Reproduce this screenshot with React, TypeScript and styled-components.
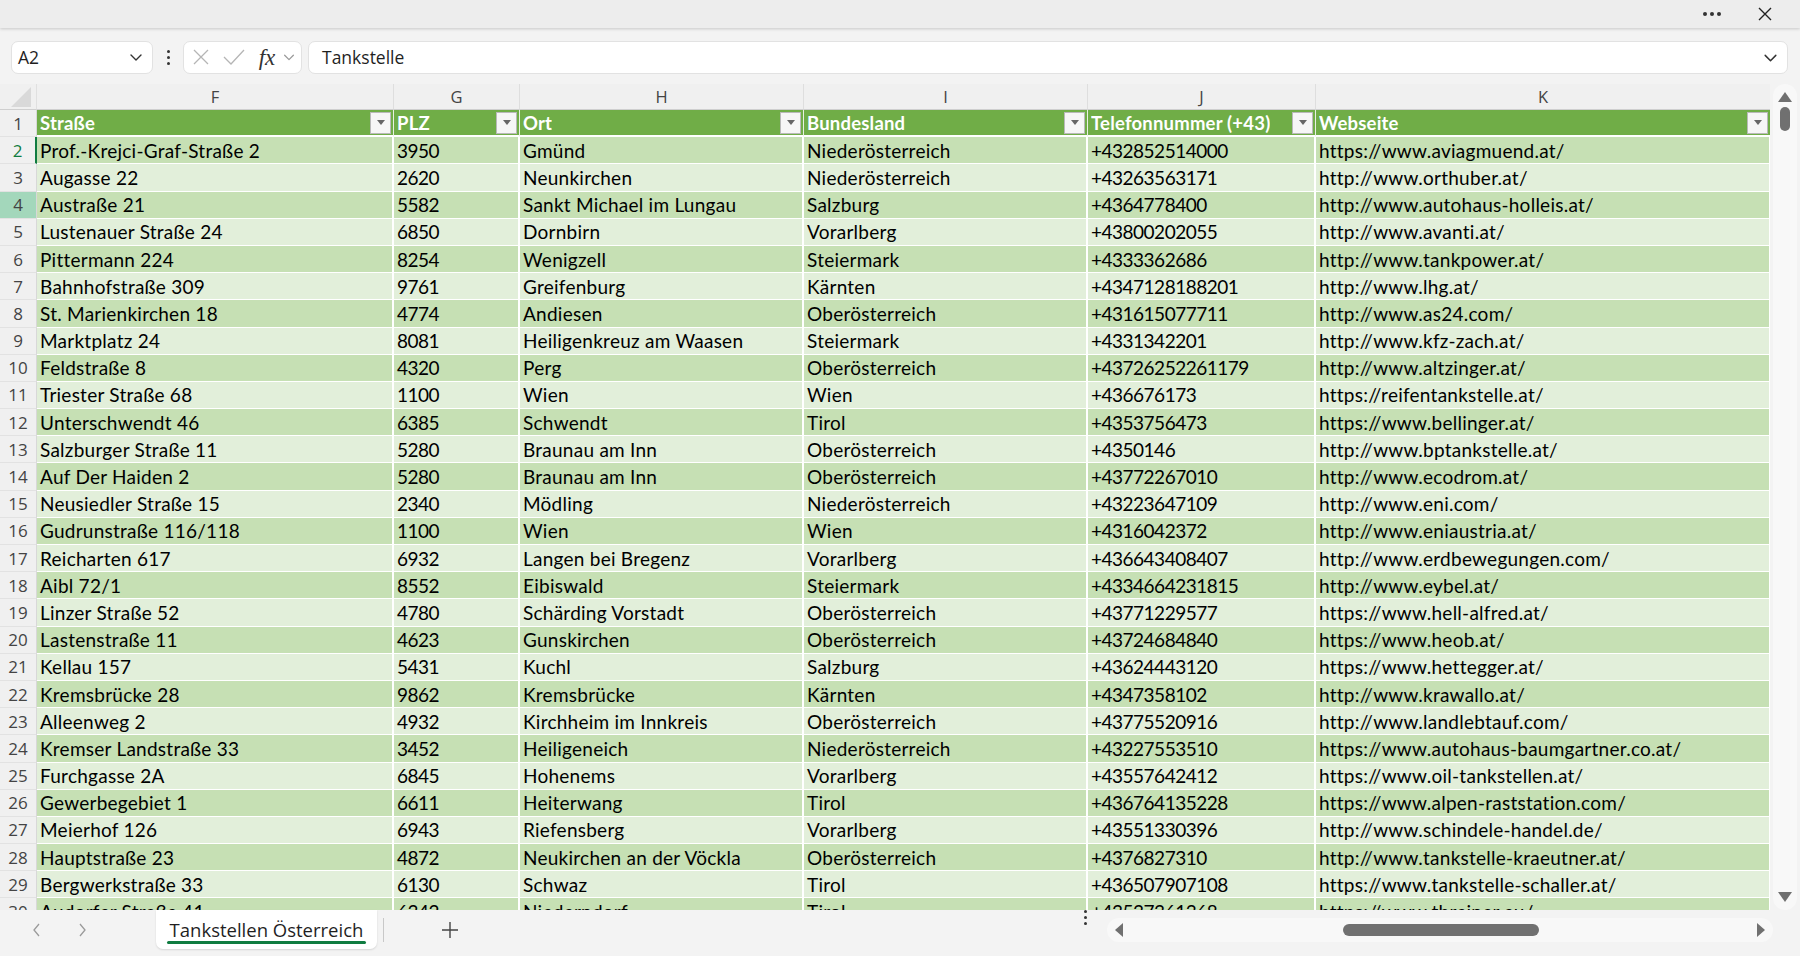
import styled, { createGlobalStyle } from 'styled-components';

const GlobalStyle = createGlobalStyle`
  html, body {
    margin: 0;
    padding: 0;
    background: #f3f3f3;
  }
  * {
    box-sizing: border-box;
  }
`;

const COLS = '37px 357px 126px 284px 284px 228px 455px';
const ROW_H = 27.2;

const letters = ['F', 'G', 'H', 'I', 'J', 'K'];
const headers = ['Straße', 'PLZ', 'Ort', 'Bundesland', 'Telefonnummer (+43)', 'Webseite'];
// Spalten mit reinen Ziffern (PLZ, Telefon)
const numericCols = [1, 4];

const rows: string[][] = [
  ['Prof.-Krejci-Graf-Straße 2', '3950', 'Gmünd', 'Niederösterreich', '+432852514000', 'https://www.aviagmuend.at/'],
  ['Augasse 22', '2620', 'Neunkirchen', 'Niederösterreich', '+43263563171', 'http://www.orthuber.at/'],
  ['Austraße 21', '5582', 'Sankt Michael im Lungau', 'Salzburg', '+4364778400', 'http://www.autohaus-holleis.at/'],
  ['Lustenauer Straße 24', '6850', 'Dornbirn', 'Vorarlberg', '+43800202055', 'http://www.avanti.at/'],
  ['Pittermann 224', '8254', 'Wenigzell', 'Steiermark', '+4333362686', 'http://www.tankpower.at/'],
  ['Bahnhofstraße 309', '9761', 'Greifenburg', 'Kärnten', '+4347128188201', 'http://www.lhg.at/'],
  ['St. Marienkirchen 18', '4774', 'Andiesen', 'Oberösterreich', '+431615077711', 'http://www.as24.com/'],
  ['Marktplatz 24', '8081', 'Heiligenkreuz am Waasen', 'Steiermark', '+4331342201', 'http://www.kfz-zach.at/'],
  ['Feldstraße 8', '4320', 'Perg', 'Oberösterreich', '+43726252261179', 'http://www.altzinger.at/'],
  ['Triester Straße 68', '1100', 'Wien', 'Wien', '+436676173', 'https://reifentankstelle.at/'],
  ['Unterschwendt 46', '6385', 'Schwendt', 'Tirol', '+4353756473', 'https://www.bellinger.at/'],
  ['Salzburger Straße 11', '5280', 'Braunau am Inn', 'Oberösterreich', '+4350146', 'http://www.bptankstelle.at/'],
  ['Auf Der Haiden 2', '5280', 'Braunau am Inn', 'Oberösterreich', '+43772267010', 'http://www.ecodrom.at/'],
  ['Neusiedler Straße 15', '2340', 'Mödling', 'Niederösterreich', '+43223647109', 'http://www.eni.com/'],
  ['Gudrunstraße 116/118', '1100', 'Wien', 'Wien', '+4316042372', 'http://www.eniaustria.at/'],
  ['Reicharten 617', '6932', 'Langen bei Bregenz', 'Vorarlberg', '+436643408407', 'http://www.erdbewegungen.com/'],
  ['Aibl 72/1', '8552', 'Eibiswald', 'Steiermark', '+4334664231815', 'http://www.eybel.at/'],
  ['Linzer Straße 52', '4780', 'Schärding Vorstadt', 'Oberösterreich', '+43771229577', 'https://www.hell-alfred.at/'],
  ['Lastenstraße 11', '4623', 'Gunskirchen', 'Oberösterreich', '+43724684840', 'https://www.heob.at/'],
  ['Kellau 157', '5431', 'Kuchl', 'Salzburg', '+43624443120', 'https://www.hettegger.at/'],
  ['Kremsbrücke 28', '9862', 'Kremsbrücke', 'Kärnten', '+4347358102', 'http://www.krawallo.at/'],
  ['Alleenweg 2', '4932', 'Kirchheim im Innkreis', 'Oberösterreich', '+43775520916', 'http://www.landlebtauf.com/'],
  ['Kremser Landstraße 33', '3452', 'Heiligeneich', 'Niederösterreich', '+43227553510', 'https://www.autohaus-baumgartner.co.at/'],
  ['Furchgasse 2A', '6845', 'Hohenems', 'Vorarlberg', '+43557642412', 'https://www.oil-tankstellen.at/'],
  ['Gewerbegebiet 1', '6611', 'Heiterwang', 'Tirol', '+436764135228', 'https://www.alpen-raststation.com/'],
  ['Meierhof 126', '6943', 'Riefensberg', 'Vorarlberg', '+43551330396', 'http://www.schindele-handel.de/'],
  ['Hauptstraße 23', '4872', 'Neukirchen an der Vöckla', 'Oberösterreich', '+4376827310', 'http://www.tankstelle-kraeutner.at/'],
  ['Bergwerkstraße 33', '6130', 'Schwaz', 'Tirol', '+436507907108', 'https://www.tankstelle-schaller.at/'],
  ['Audorfer Straße 41', '6342', 'Niederndorf', 'Tirol', '+43537361368', 'https://www.threiner.eu/'],
];

const Chevron = ({ size = 14, color = '#444' }: { size?: number; color?: string }) => (
  <svg width={size} height={size} viewBox="0 0 16 16">
    <path d="M3 6l5 5 5-5" fill="none" stroke={color} strokeWidth="1.4" strokeLinecap="round" strokeLinejoin="round" />
  </svg>
);

const App = () => {
  return (
    <>
      <GlobalStyle />
      <Shell>
        <TitleBar>
          <Dots>
            <i />
            <i />
            <i />
          </Dots>
          <CloseBtn>
            <svg width="16" height="16" viewBox="0 0 16 16">
              <path d="M2 2l12 12M14 2L2 14" stroke="#222" strokeWidth="1.4" />
            </svg>
          </CloseBtn>
        </TitleBar>

        {/* Formelzeile */}
        <FormulaBar>
          <NameBox>
            <span>A2</span>
            <Chevron size={16} color="#333" />
          </NameBox>
          <Kebab>
            <i />
            <i />
            <i />
          </Kebab>
          <FxBox>
            <IconSlot $w={30}>
              <svg width="20" height="20" viewBox="0 0 20 20">
                <path d="M3 3l14 14M17 3L3 17" stroke="#b5b5b5" strokeWidth="1.3" />
              </svg>
            </IconSlot>
            <IconSlot $w={36}>
              <svg width="24" height="20" viewBox="0 0 24 20">
                <path d="M2 10l7 7L22 3" fill="none" stroke="#b5b5b5" strokeWidth="1.3" />
              </svg>
            </IconSlot>
            <IconSlot $w={30}>
              <FxLabel>fx</FxLabel>
            </IconSlot>
            <Chevron size={14} color="#999" />
          </FxBox>
          <FormulaInput>
            <span>Tankstelle</span>
            <Chevron size={17} color="#333" />
          </FormulaInput>
        </FormulaBar>

        <SheetArea>
          <Grid>
            <GridRow $height={26}>
              <Corner>
                <svg width="20" height="20" viewBox="0 0 20 20">
                  <path d="M20 0L20 20L0 20Z" fill="#d9d9d9" />
                </svg>
              </Corner>
              {letters.map((l) => (
                <ColHead key={l}>{l}</ColHead>
              ))}
            </GridRow>

            <GridRow $height={ROW_H}>
              <RowHead>1</RowHead>
              {headers.map((h) => (
                <HeadCell key={h}>
                  <span>{h}</span>
                  <FilterBtn>
                    <svg width="8" height="5" viewBox="0 0 8 5">
                      <path d="M0 0h8L4 5z" fill="#666" />
                    </svg>
                  </FilterBtn>
                </HeadCell>
              ))}
            </GridRow>

            {rows.map((r, i) => {
              const n = i + 2;
              return (
                <GridRow key={n} $height={ROW_H}>
                  <RowHead $active={n === 2} $selected={n === 4}>
                    {n}
                  </RowHead>
                  {r.map((c, j) => (
                    <DataCell key={j} $dark={n % 2 === 0} $numeric={numericCols.includes(j)}>
                      {c}
                    </DataCell>
                  ))}
                </GridRow>
              );
            })}
          </Grid>

          <VScroll>
            <svg width="14" height="10" viewBox="0 0 14 10">
              <path d="M7 0L14 10H0Z" fill="#707070" />
            </svg>
            <VThumb />
            <VSpacer />
            <svg width="14" height="10" viewBox="0 0 14 10">
              <path d="M0 0H14L7 10Z" fill="#707070" />
            </svg>
          </VScroll>
        </SheetArea>

        {/* Blattregister */}
        <BottomBar>
          <NavArrows>
            <svg width="12" height="16" viewBox="0 0 12 16">
              <path d="M8 2L3 8l5 6" fill="none" stroke="#9a9a9a" strokeWidth="1.3" />
            </svg>
            <svg width="12" height="16" viewBox="0 0 12 16">
              <path d="M4 2l5 6-5 6" fill="none" stroke="#9a9a9a" strokeWidth="1.3" />
            </svg>
          </NavArrows>
          <SheetTab>Tankstellen Österreich</SheetTab>
          <TabDivider />
          <AddSheet>
            <svg width="18" height="18" viewBox="0 0 18 18">
              <path d="M9 1v16M1 9h16" stroke="#444" strokeWidth="1.4" />
            </svg>
          </AddSheet>
          <BottomSpacer />
          <Kebab>
            <i />
            <i />
            <i />
          </Kebab>
          <HScroll>
            <svg width="8" height="14" viewBox="0 0 8 14">
              <path d="M8 0V14L0 7Z" fill="#707070" />
            </svg>
            <HTrack>
              <HThumb />
            </HTrack>
            <svg width="8" height="14" viewBox="0 0 8 14">
              <path d="M0 0L8 7L0 14Z" fill="#707070" />
            </svg>
          </HScroll>
        </BottomBar>
      </Shell>
    </>
  );
};

const Shell = styled.div`
  display: flex;
  flex-direction: column;
  width: 1800px;
  height: 956px;
  overflow: hidden;
  background: #f3f3f3;
  font-family: 'Open Sans', 'Noto Sans', sans-serif;
  color: #1f1f1f;
`;

const TitleBar = styled.header`
  height: 28px;
  flex-shrink: 0;
  display: flex;
  align-items: center;
  justify-content: flex-end;
  gap: 36px;
  padding-right: 27px;
  background: #ededed;
  box-shadow: 0 1px 3px rgba(0, 0, 0, 0.18);
  position: relative;
  z-index: 2;
`;

const Dots = styled.div`
  display: flex;
  gap: 3px;
  i {
    width: 4px;
    height: 4px;
    border-radius: 50%;
    background: #333;
  }
`;

const CloseBtn = styled.div`
  display: flex;
  align-items: center;
`;

const FormulaBar = styled.div`
  height: 56px;
  flex-shrink: 0;
  display: flex;
  align-items: center;
  padding: 2px 12px 0 11px;
`;

const Field = styled.div`
  height: 33px;
  display: flex;
  align-items: center;
  background: #fff;
  border: 1px solid #e2e2e2;
  border-radius: 7px;
  font-size: 17.5px;
  color: #1f1f1f;
`;

const NameBox = styled(Field)`
  width: 142px;
  justify-content: space-between;
  padding: 0 8px 0 6px;
`;

const Kebab = styled.div`
  width: 30px;
  display: flex;
  flex-direction: column;
  align-items: center;
  gap: 3px;
  i {
    width: 3px;
    height: 3px;
    border-radius: 50%;
    background: #333;
  }
`;

const FxBox = styled(Field)`
  width: 119px;
  padding: 0 0 0 2px;
`;

const IconSlot = styled.div<{ $w: number }>`
  width: ${(p) => p.$w}px;
  display: flex;
  align-items: center;
  justify-content: center;
`;

const FxLabel = styled.span`
  font-family: 'Liberation Serif', serif;
  font-style: italic;
  font-size: 23px;
  line-height: 1;
  color: #333;
`;

const FormulaInput = styled(Field)`
  flex: 1;
  margin-left: 6px;
  justify-content: space-between;
  padding: 0 8px 0 13px;
`;

const SheetArea = styled.div`
  flex: 1;
  min-height: 0;
  display: flex;
`;

const Grid = styled.div`
  width: 1770px;
  overflow: hidden;
`;

const GridRow = styled.div<{ $height: number }>`
  display: grid;
  grid-template-columns: ${COLS};
  height: ${(p) => p.$height}px;
`;

const Corner = styled.div`
  display: flex;
  align-items: flex-end;
  justify-content: flex-end;
  padding: 0 5px 2px 0;
  background: #f0f0f0;
  border-right: 1px solid #e0e0e0;
  border-bottom: 1px solid #cfcfcf;
`;

const ColHead = styled.div`
  display: flex;
  align-items: center;
  justify-content: center;
  background: #f0f0f0;
  border-right: 1px solid #dedede;
  border-bottom: 1px solid #cfcfcf;
  font-size: 16.5px;
  color: #444;
`;

const RowHead = styled.div<{ $active?: boolean; $selected?: boolean }>`
  display: flex;
  align-items: center;
  justify-content: center;
  background: ${(p) => (p.$selected ? '#a3d7bb' : '#f0f0f0')};
  border-bottom: 1px solid #e2e2e2;
  border-right: ${(p) => (p.$active ? '2px solid #107c41' : '1px solid #d8d8d8')};
  font-size: 17px;
  color: ${(p) => (p.$active ? '#107c41' : '#444')};
`;

const HeadCell = styled.div`
  display: flex;
  align-items: center;
  justify-content: space-between;
  padding: 0 2px 0 3px;
  background: #70ad47;
  border-right: 1px solid #e8f0e2;
  border-bottom: 2px solid #fff;
  font-family: Lato, 'Open Sans', sans-serif;
  font-weight: 700;
  font-size: 18.5px;
  letter-spacing: 0.2px;
  color: #fff;
  span {
    white-space: nowrap;
    overflow: hidden;
  }
`;

const FilterBtn = styled.div`
  width: 21px;
  height: 22px;
  flex-shrink: 0;
  display: flex;
  align-items: center;
  justify-content: center;
  background: #f6f6f6;
  border: 1px solid #b9b9b9;
`;

const DataCell = styled.div<{ $dark: boolean; $numeric: boolean }>`
  display: flex;
  align-items: center;
  padding: 0 3px;
  background: ${(p) => (p.$dark ? '#c6e0b4' : '#e2efda')};
  border-right: 2px solid #fff;
  border-bottom: 1px solid #fff;
  font-family: Lato, 'Open Sans', sans-serif;
  font-size: 19px;
  letter-spacing: ${(p) => (p.$numeric ? '-0.5px' : '0.25px')};
  color: #000;
  white-space: nowrap;
  overflow: hidden;
`;

const VScroll = styled.div`
  width: 24px;
  margin: 0 3px 0 3px;
  display: flex;
  flex-direction: column;
  align-items: center;
  padding: 8px 0 8px;
  background: #f8f8f8;
  border-radius: 12px;
`;

const VThumb = styled.div`
  width: 10px;
  height: 24px;
  margin-top: 5px;
  border-radius: 5px;
  background: #707070;
`;

const VSpacer = styled.div`
  flex: 1;
`;

const BottomBar = styled.footer`
  height: 46px;
  flex-shrink: 0;
  display: flex;
  align-items: flex-start;
`;

const NavArrows = styled.div`
  width: 156px;
  height: 40px;
  display: flex;
  align-items: center;
  gap: 33px;
  padding-left: 31px;
`;

const SheetTab = styled.div`
  width: 221px;
  height: 39px;
  display: flex;
  align-items: center;
  justify-content: center;
  background: #fff;
  border-radius: 0 0 7px 7px;
  box-shadow: 0 1px 2px rgba(0, 0, 0, 0.12);
  font-size: 18.5px;
  color: #1f1f1f;
  position: relative;
  &::after {
    content: '';
    position: absolute;
    left: 11px;
    right: 11px;
    bottom: 5px;
    height: 3px;
    border-radius: 2px;
    background: #107c41;
  }
`;

const TabDivider = styled.div`
  width: 1px;
  height: 24px;
  margin: 8px 0 0 6px;
  background: #c8c8c8;
`;

const AddSheet = styled.div`
  width: 132px;
  height: 40px;
  display: flex;
  align-items: center;
  justify-content: center;
`;

const BottomSpacer = styled.div`
  flex: 1;
`;

const HScroll = styled.div`
  width: 666px;
  height: 24px;
  margin: 8px 27px 0 7px;
  display: flex;
  align-items: center;
  gap: 6px;
  padding: 0 8px;
  background: #f8f8f8;
  border-radius: 12px;
`;

const HTrack = styled.div`
  flex: 1;
  height: 12px;
  position: relative;
`;

const HThumb = styled.div`
  position: absolute;
  left: 214px;
  width: 196px;
  height: 12px;
  border-radius: 6px;
  background: #707070;
`;

export default App;
